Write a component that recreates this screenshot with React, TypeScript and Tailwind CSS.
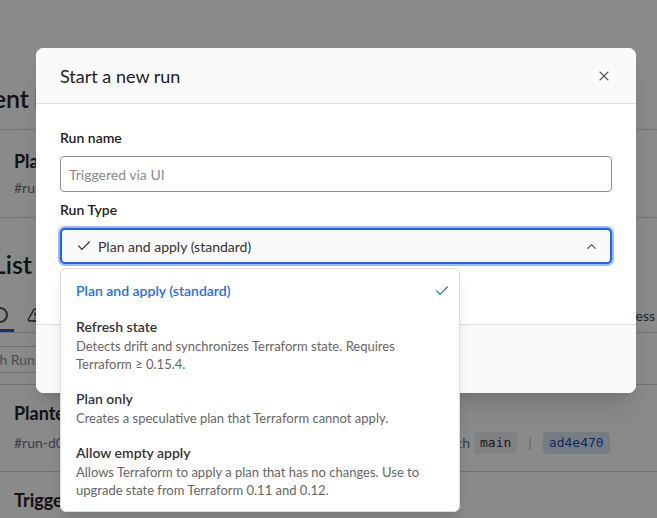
import { Check, ChevronUp, X, TriangleAlert } from "lucide-react";

interface RunType {
  title: string;
  desc?: string;
}

const runTypes: RunType[] = [
  { title: "Plan and apply (standard)" },
  {
    title: "Refresh state",
    desc: "Detects drift and synchronizes Terraform state. Requires Terraform ≥ 0.15.4.",
  },
  { title: "Plan only", desc: "Creates a speculative plan that Terraform cannot apply." },
  {
    title: "Allow empty apply",
    desc: "Allows Terraform to apply a plan that has no changes. Use to upgrade state from Terraform 0.11 and 0.12.",
  },
];

// texte qui déborde à gauche de l'écran
function LeftCut({ w, children, className }: { w: number; children: React.ReactNode; className?: string }) {
  return (
    <div className={`flex shrink-0 justify-end overflow-hidden whitespace-nowrap ${className ?? ""}`} style={{ width: w }}>
      {children}
    </div>
  );
}

function Background() {
  return (
    <div className="text-[#1f2328]">
      <div className="flex h-[130px] items-end border-b border-[#d0d4da] pb-[13px]">
        <div className="flex items-baseline text-[25px] font-semibold leading-[36px]">
          <LeftCut w={29}>Environment</LeftCut>
          <span className="ml-[5px] text-[#c2640f]">lab-prod</span>
        </div>
      </div>
      <div className="h-[88px] border-b border-[#d0d4da] px-[14px] pt-[18px]">
        <div className="text-[18px] font-bold leading-[26px]">Plan and apply triggered</div>
        <div className="mt-[4px] text-[14px] leading-[20px] text-[#6b7280]">#run-a91f2c3</div>
      </div>
      <div className="flex h-[70px] items-end pb-[6px]">
        <LeftCut w={32} className="text-[25px] font-semibold leading-[36px]">
          Run List
        </LeftCut>
      </div>
      <div className="flex h-[45px] items-center justify-between border-b border-[#d0d4da] pt-[10px]">
        <div className="flex h-full items-center">
          <div className="flex h-full w-[14px] items-center border-b-[3px] border-[#1f5fd6] pt-[3px]">
            <span className="-ml-[8px] block h-[16px] w-[16px] rounded-full border-2 border-[#555]" />
          </div>
          <TriangleAlert className="ml-[13px] h-[16px] w-[16px] text-[#333]" strokeWidth={2} />
        </div>
        <span className="pr-[2px] text-[14px] text-[#444]">In progress</span>
      </div>
      <div className="flex h-[52px] items-start border-b border-[#d0d4da] pt-[13px]">
        <LeftCut w={52} className="h-[27px] items-center rounded-r border border-l-0 border-[#c9ced6] pr-[10px] text-[14px] text-[#8a9099]">
          Search Runs
        </LeftCut>
      </div>
      <div className="h-[87px] border-b border-[#d0d4da] px-[14px] pt-[15px]">
        <div className="text-[18px] font-bold leading-[26px]">Plantest run finished</div>
        <div className="mt-[6px] flex items-center text-[14px] leading-[20px] text-[#6b7280]">
          <span className="flex w-[456px] shrink-0 justify-between whitespace-nowrap">
            <span>#run-d04c1e8 · Triggered via UI</span>
            <span>on branch</span>
          </span>
          <span className="ml-[4px] rounded bg-[#eceef1] px-[6px] py-[1px] font-['DejaVu_Sans_Mono',monospace] text-[13px] text-[#333]">
            main
          </span>
          <span className="mx-[11px] text-[#bbb]">|</span>
          <span className="rounded bg-[#dbe5f3] px-[6px] py-[1px] font-['DejaVu_Sans_Mono',monospace] text-[13px] text-[#1f4fb0]">
            ad4e470
          </span>
        </div>
      </div>
      <div className="px-[14px] pt-[15px]">
        <div className="text-[18px] font-bold leading-[26px]">Triggered via UI</div>
      </div>
    </div>
  );
}

export default function App() {
  return (
    <div className="relative h-[518px] w-[657px] overflow-hidden bg-white font-['Lato',sans-serif]">
      <Background />
      <div className="absolute inset-0 bg-[rgba(0,0,0,0.46)]" />

      <div className="absolute left-[36px] top-[48px] w-[600px] rounded-lg bg-white shadow-xl">
        <div className="flex h-[56px] items-center justify-between rounded-t-lg border-b border-[#dedede] bg-[#fafafa] px-6">
          <h2 className="text-[18px] leading-[24px] text-[#222]">Start a new run</h2>
          <X className="h-[16px] w-[16px] text-[#555]" strokeWidth={1.6} />
        </div>
        <div className="px-6 pb-[60px] pt-6">
          <label className="block text-[14px] font-semibold leading-[20px] text-[#222]">Run name</label>
          <div className="mt-2 flex h-[36px] items-center rounded-[4px] border border-[#8c909b] px-2 text-[14px] text-[#8a8a8a]">
            Triggered via UI
          </div>
          <label className="mt-2 block text-[14px] font-semibold leading-[20px] text-[#222]">Run Type</label>
          <div className="mt-2 flex h-[36px] items-center justify-between rounded-[5px] border-2 border-[#1f63ec] bg-[#fafafa] pl-[14px] pr-[11px] text-[14px] text-[#333] ring-2 ring-[#6f9ef5]/70">
            <div className="flex items-center gap-[6px]">
              <Check className="h-[16px] w-[16px] text-[#333]" strokeWidth={1.8} />
              <span>Plan and apply (standard)</span>
            </div>
            <ChevronUp className="h-[15px] w-[15px] text-[#444]" strokeWidth={1.8} />
          </div>
        </div>
        <div className="flex h-[69px] items-center gap-3 rounded-b-lg border-t border-[#dedede] bg-[#fafafa] px-6">
          <button className="rounded bg-[#1f63ec] px-4 py-2 text-[14px] text-white">Start run</button>
          <button className="rounded border border-[#ccc] px-4 py-2 text-[14px] text-[#333]">Cancel</button>
        </div>
      </div>

      <div className="absolute left-[60px] top-[268px] w-[400px] rounded-md border border-[#dcdcdc] bg-white py-1 shadow-lg">
        {runTypes.map((t, i) => (
          <div key={t.title} className="flex items-start justify-between py-2 pl-[15px] pr-[9px]">
            <div>
              <div
                className={`text-[14px] font-semibold leading-[20px] ${i === 0 ? "text-[#1d6ef2]" : "text-[#333]"}`}
              >
                {t.title}
              </div>
              {t.desc && <div className="pr-[30px] text-[13px] leading-[18px] text-[#666]">{t.desc}</div>}
            </div>
            {i === 0 && <Check className="mt-[2px] h-[16px] w-[16px] text-[#1d6ef2]" strokeWidth={1.8} />}
          </div>
        ))}
      </div>
    </div>
  );
}
